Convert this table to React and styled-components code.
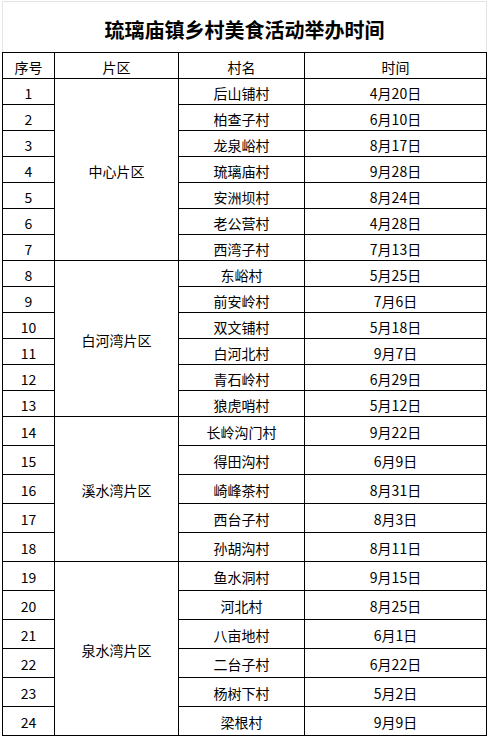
import React from 'react';
import styled, {createGlobalStyle} from 'styled-components';

const GlobalStyle = createGlobalStyle`
    html, body {
        margin: 0;
        padding: 0;
        background: #fff;
    }
    body {
        font-family: "Noto Sans CJK SC", "Noto Sans", sans-serif;
        color: #000;
    }
`;

const regions = [
    {
        name: '中心片区',
        rows: [
            ['后山铺村', '4月20日'],
            ['柏查子村', '6月10日'],
            ['龙泉峪村', '8月17日'],
            ['琉璃庙村', '9月28日'],
            ['安洲坝村', '8月24日'],
            ['老公营村', '4月28日'],
            ['西湾子村', '7月13日'],
        ],
    },
    {
        name: '白河湾片区',
        rows: [
            ['东峪村', '5月25日'],
            ['前安岭村', '7月6日'],
            ['双文铺村', '5月18日'],
            ['白河北村', '9月7日'],
            ['青石岭村', '6月29日'],
            ['狼虎哨村', '5月12日'],
        ],
    },
    {
        name: '溪水湾片区',
        tall: true,
        rows: [
            ['长岭沟门村', '9月22日'],
            ['得田沟村', '6月9日'],
            ['崎峰茶村', '8月31日'],
            ['西台子村', '8月3日'],
            ['孙胡沟村', '8月11日'],
        ],
    },
    {
        name: '泉水湾片区',
        tall: true,
        rows: [
            ['鱼水洞村', '9月15日'],
            ['河北村', '8月25日'],
            ['八亩地村', '6月1日'],
            ['二台子村', '6月22日'],
            ['杨树下村', '5月2日'],
            ['梁根村', '9月9日'],
        ],
    },
];

const App = () => {
    let n = 0;
    return (
        <Sheet>
            <GlobalStyle/>
            <TitleBar>琉璃庙镇乡村美食活动举办时间</TitleBar>
            <Table>
                <colgroup>
                    <col style={{width: 52}}/>
                    <col style={{width: 124}}/>
                    <col style={{width: 126}}/>
                    <col style={{width: 182}}/>
                </colgroup>
                <thead>
                <Row>
                    <Cell as="th">序号</Cell>
                    <Cell as="th">片区</Cell>
                    <Cell as="th">村名</Cell>
                    <Cell as="th">时间</Cell>
                </Row>
                </thead>
                <tbody>
                {regions.map(region =>
                    region.rows.map(([village, date], i) => {
                        n += 1;
                        return (
                            <Row key={n} $tall={region.tall}>
                                <Cell>{n}</Cell>
                                {i === 0 && <Cell rowSpan={region.rows.length}>{region.name}</Cell>}
                                <Cell>{village}</Cell>
                                <Cell>{date}</Cell>
                            </Row>
                        );
                    })
                )}
                </tbody>
            </Table>
        </Sheet>
    );
};

// --- Styled Components ---

const Sheet = styled.div`
    width: 485px;
    margin: 1px 0 0 2px;
`;

const TitleBar = styled.div`
    height: 51px;
    border: 1px solid #e4e4e4;
    border-bottom: none;
    display: flex;
    align-items: center;
    justify-content: center;
    padding-top: 4px;
    box-sizing: border-box;
    font-size: 20px;
    font-weight: 700;
    letter-spacing: 0;
`;

const Table = styled.table`
    width: 485px;
    table-layout: fixed;
    border-collapse: collapse;
    border: 1px solid #000;
`;

const Row = styled.tr`
    height: ${({$tall}) => ($tall ? '29px' : '26px')};
`;

const Cell = styled.td`
    border: 1px solid #000;
    padding: 0;
    text-align: center;
    vertical-align: middle;
    font-size: 14px;
    font-weight: 400;
    line-height: 1;
    padding-top: 2px;
`;

export default App;
